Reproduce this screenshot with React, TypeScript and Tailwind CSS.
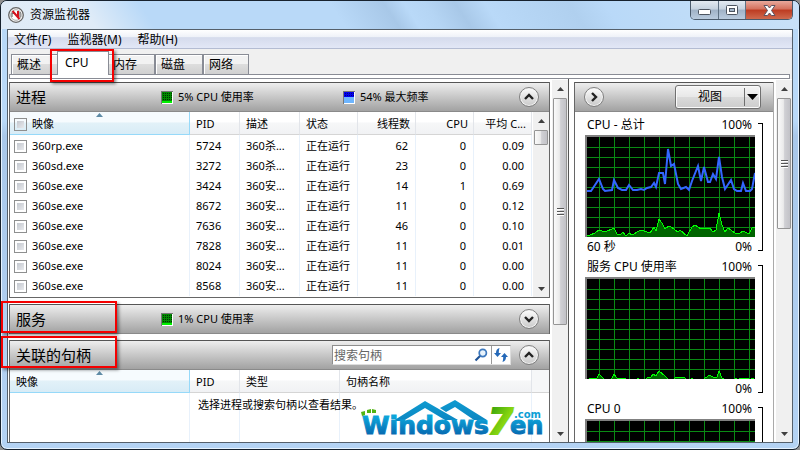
import type { ReactNode } from "react";
import clsx from "clsx";

const processes = [
    { name: "360rp.exe", pid: 5724, desc: "360杀...", threads: 62, cpu: 0, avg: "0.09" },
    { name: "360sd.exe", pid: 3272, desc: "360杀...", threads: 23, cpu: 0, avg: "0.00" },
    { name: "360se.exe", pid: 3424, desc: "360安...", threads: 14, cpu: 1, avg: "0.69" },
    { name: "360se.exe", pid: 8672, desc: "360安...", threads: 11, cpu: 0, avg: "0.12" },
    { name: "360se.exe", pid: 7636, desc: "360安...", threads: 46, cpu: 0, avg: "0.10" },
    { name: "360se.exe", pid: 7828, desc: "360安...", threads: 11, cpu: 0, avg: "0.01" },
    { name: "360se.exe", pid: 8024, desc: "360安...", threads: 11, cpu: 0, avg: "0.00" },
    { name: "360se.exe", pid: 8568, desc: "360安...", threads: 11, cpu: 0, avg: "0.00" },
];

const tabs = ["概述", "CPU", "内存", "磁盘", "网络"];

const frequencyLine =
    "0,54 4,54 8,48 12,42 16,52 18,54 25,53 27,43 31,51 35,53 39,53 42,48 46,53 50,53 54,52 57,53 60,51 64,50 67,46 69,50 72,36 76,36 78,47 81,12 84,29 87,27 91,47 94,52 99,50 102,53 105,44 111,29 114,44 117,30 121,45 123,45 126,37 129,42 132,20 135,40 138,52 144,43 147,52 150,54 154,54 156,46 159,54 163,54 165,52 168,36";
const usageLine =
    "0,99 3,98 8,96 12,93 18,95 27,91 30,97 34,97 36,95 39,99 42,96 45,98 54,93 63,96 67,90 69,94 72,82 75,86 78,92 82,89 84,90 91,95 93,93 100,99 105,90 108,88 114,92 123,91 126,95 129,93 132,76 135,88 138,95 141,91 148,96 153,96 156,94 162,97 165,91 168,90";
const serviceLine =
    "0,101 5,99 10,99 12,95 16,99 18,101 24,101 25,99 27,95 30,99 38,99 40,101 50,101 51,99 53,101 59,101 60,99 64,98 66,95 69,97 72,92 78,97 80,99 82,101 87,101 88,99 93,98 98,99 100,101 104,101 105,99 107,101 117,101 118,99 123,96 127,99 130,98 132,92 135,99 138,101 147,101 149,99 151,101 153,99 161,99 163,101 165,99 168,101";

function TriangleIcon({ down = false }: { down?: boolean }) {
    return (
        <svg width="7" height="4" viewBox="0 0 7 4" aria-hidden="true">
            <path d={down ? "M0 0h7L3.5 4z" : "M0 4h7L3.5 0z"} fill="#404040" />
        </svg>
    );
}

function Scrollbar({ label, thumb, grip = false }: { label: string; thumb: string; grip?: boolean }) {
    return (
        <div className="flex w-4 shrink-0 flex-col bg-[#f0f0f0]">
            <button type="button" aria-label={label + " 向上"} className="flex h-[18px] shrink-0 items-center justify-center">
                <TriangleIcon />
            </button>
            <div className="min-h-0 flex-1">
                <div
                    className={clsx(
                        "mx-px flex items-center justify-center rounded-[1px] border border-[#959595] bg-[linear-gradient(90deg,#fafafa,#ebebeb_45%,#d0d0d4_55%,#c2c2c7)]",
                        thumb
                    )}
                >
                    {grip && (
                        <svg width="7" height="8" viewBox="0 0 7 8" shapeRendering="crispEdges" aria-hidden="true">
                            <path d="M0 0h7v1H0zM0 3h7v1H0zM0 6h7v1H0z" fill="#555" />
                            <path d="M0 1h7v1H0zM0 4h7v1H0zM0 7h7v1H0z" fill="#fff" />
                        </svg>
                    )}
                </div>
            </div>
            <button type="button" aria-label={label + " 向下"} className="flex h-[17px] shrink-0 items-center justify-center">
                <TriangleIcon down />
            </button>
        </div>
    );
}

function RoundButton({ label, dir }: { label: string; dir: "up" | "down" | "right" }) {
    const paths = { up: "M5 11l4-4 4 4", down: "M5 7l4 4 4-4", right: "M7 5l4 4-4 4" };
    return (
        <button
            type="button"
            aria-label={label}
            className="flex size-5 shrink-0 items-center justify-center rounded-full border border-[#808080] bg-linear-to-b from-[#fdfdfd] to-[#c9c9c9] shadow-[inset_0_0_0_1px_#f4f4f4]"
        >
            <svg width="18" height="18" viewBox="0 0 18 18" fill="none" stroke="#222" strokeWidth="2.4" aria-hidden="true">
                <path d={paths[dir]} />
            </svg>
        </button>
    );
}

function Metric({ blue = false, children }: { blue?: boolean; children: ReactNode }) {
    return (
        <div className="flex w-[182px] shrink-0 items-center gap-[5px] whitespace-nowrap text-[11px]">
            <svg width="12" height="13" viewBox="0 0 12 13" shapeRendering="crispEdges" aria-hidden="true">
                <defs>
                    <pattern id={blue ? "dots-blue" : "dots-green"} width="2" height="2" patternUnits="userSpaceOnUse">
                        <rect width="2" height="2" fill={blue ? "#0000f0" : "#008a00"} />
                        <rect width="1" height="1" fill={blue ? "#000080" : "#003000"} />
                    </pattern>
                </defs>
                <rect width="12" height="13" fill="#fff" />
                <path d="M0 0h12v1H1v12H0z" fill="#777" />
                <rect x="1" y="1" width="10" height="11" fill={blue ? "#6db5ff" : "#00f000"} />
                <rect x="1" y="1" width="10" height={blue ? 5 : 9} fill={blue ? "url(#dots-blue)" : "url(#dots-green)"} />
            </svg>
            <span>{children}</span>
        </div>
    );
}

function SectionHeader({ title, open, children }: { title: string; open: boolean; children?: ReactNode }) {
    return (
        <div className="flex h-[30px] shrink-0 items-center border-y border-t-[#555] border-b-[#8a8a8a] bg-linear-to-b from-[#eeeeee] to-[#a2a2a2] pr-2.5 pl-1.5">
            <h2 className="w-[145px] shrink-0 text-[15px]">{title}</h2>
            <div className="flex min-w-0 flex-1 items-center">{children}</div>
            <RoundButton label={title} dir={open ? "up" : "down"} />
        </div>
    );
}

function Th({ sorted = false, right = false, children }: { sorted?: boolean; right?: boolean; children: ReactNode }) {
    return (
        <th
            scope="col"
            className={clsx(
                "relative h-[23px] overflow-hidden border-r border-b px-[5px] pt-0.5 font-normal whitespace-nowrap",
                right ? "text-right" : "pl-1.5 text-left",
                sorted
                    ? "border-[#96d9f9] bg-[linear-gradient(#f6fbfe_45%,#e2f1f8_50%,#d8ecf6)]"
                    : "border-r-[#e2e5ea] border-b-[#d5d5d5] bg-[linear-gradient(#ffffff_45%,#f6f7f8_50%,#f1f2f4)]"
            )}
        >
            {sorted && (
                <svg className="absolute top-px left-1/2 -ml-1" width="7" height="4" viewBox="0 0 7 4" aria-hidden="true">
                    <path d="M0 4h7L3.5 0z" fill="#5e8ba6" />
                </svg>
            )}
            {children}
        </th>
    );
}

function Check({ label }: { label: string }) {
    return (
        <input
            type="checkbox"
            aria-label={label}
            className="mr-[5px] size-[13px] shrink-0 appearance-none border border-[#8e8f8f] bg-white bg-[linear-gradient(135deg,#b9bec6,#f2f3f5)] bg-clip-content p-0.5"
        />
    );
}

function ProcessTable() {
    const cell = "border-r border-[#e8f1fb] whitespace-nowrap";
    return (
        <table className="w-full table-fixed border-separate border-spacing-0 text-[11px] leading-4">
            <colgroup>
                <col />
                <col className="w-[50px]" />
                <col className="w-[60px]" />
                <col className="w-[58px]" />
                <col className="w-[58px]" />
                <col className="w-[58px]" />
                <col className="w-[58px]" />
            </colgroup>
            <thead>
                <tr>
                    <Th sorted>
                        <div className="-ml-0.5 flex items-center">
                            <Check label="全选" />
                            映像
                        </div>
                    </Th>
                    <Th>PID</Th>
                    <Th>描述</Th>
                    <Th>状态</Th>
                    <Th right>线程数</Th>
                    <Th right>CPU</Th>
                    <Th right>平均 C...</Th>
                </tr>
            </thead>
            <tbody>
                <tr aria-hidden="true">
                    {[0, 1, 2, 3, 4, 5, 6].map((i) => (
                        <td key={i} className={clsx(cell, "h-px")} />
                    ))}
                </tr>
                {processes.map((p) => (
                    <tr key={p.pid} className="h-5">
                        <td className={cell}>
                            <label className="flex items-center pl-1">
                                <Check label={p.name} />
                                {p.name}
                            </label>
                        </td>
                        <td className={clsx(cell, "pl-1.5")}>{p.pid}</td>
                        <td className={clsx(cell, "pl-1.5")}>{p.desc}</td>
                        <td className={clsx(cell, "pl-1.5")}>正在运行</td>
                        <td className={clsx(cell, "pr-[7px] text-right")}>{p.threads}</td>
                        <td className={clsx(cell, "pr-[7px] text-right")}>{p.cpu}</td>
                        <td className={clsx(cell, "pr-[7px] text-right")}>{p.avg}</td>
                    </tr>
                ))}
            </tbody>
        </table>
    );
}

function HandleTable() {
    const cell = "border-r border-[#e8f1fb] align-top";
    return (
        <table className="w-full table-fixed border-separate border-spacing-0 text-[11px] leading-4">
            <colgroup>
                <col className="w-[180px]" />
                <col className="w-[50px]" />
                <col className="w-[100px]" />
                <col />
                <col className="w-[17px]" />
            </colgroup>
            <thead>
                <tr>
                    <Th sorted>映像</Th>
                    <Th>PID</Th>
                    <Th>类型</Th>
                    <Th>句柄名称</Th>
                    <td className="border-b border-[#d5d5d5] bg-[#f6f7f8]" />
                </tr>
            </thead>
            <tbody>
                <tr className="h-[60px]">
                    <td className={cell} />
                    <td className={clsx(cell, "pt-1 pl-2 whitespace-nowrap")}>选择进程或搜索句柄以查看结果。</td>
                    <td className={cell} />
                    <td className={cell} />
                    <td />
                </tr>
            </tbody>
        </table>
    );
}

type GraphProps = { title: string; footer?: ReactNode; usage?: string; frequency?: string };

function Graph({ title, footer, usage, frequency }: GraphProps) {
    return (
        <section className="flex shrink-0 text-[12px]">
            <div className="min-w-0 flex-1">
                <div className="flex h-5 items-center justify-between pr-[3px] pl-0.5">
                    <h3>{title}</h3>
                    <span>100%</span>
                </div>
                <div className="h-[102px] border-t-2 border-l-2 border-[#808080] bg-black">
                    <svg className="block h-full w-full" viewBox="0 0 168 100" preserveAspectRatio="none" aria-hidden="true">
                        <g fill="#0a8a14" shapeRendering="crispEdges">
                            {Array.from({ length: 11 }, (_, i) => (
                                <rect key={i} x={12 + i * 15} y="0" width="1" height="100" />
                            ))}
                            {Array.from({ length: 9 }, (_, i) => (
                                <rect key={i} x="0" y={10 + i * 10} width="168" height="1" />
                            ))}
                        </g>
                        {usage && (
                            <>
                                <polygon points={"0,102 " + usage + " 168,102"} fill="#006400" />
                                <polyline points={usage} fill="none" stroke="#00ff00" shapeRendering="crispEdges" />
                            </>
                        )}
                        {frequency && <polyline points={frequency} fill="none" stroke="#3366ff" strokeWidth="2" />}
                    </svg>
                </div>
                <div className="flex h-5 items-center justify-between pr-[3px] pl-0.5">{footer}</div>
            </div>
            <div className="mt-2 mb-1.5 ml-[3px] w-[5px] border-y border-r border-black" />
        </section>
    );
}

function WindowControls() {
    const glass = "bg-[linear-gradient(#e3eaf1,#c5d2df_45%,#a0b2c6_50%,#b9cbde)]";
    return (
        <div className="flex h-[19px] self-start overflow-hidden rounded-b-[5px] border border-t-0 border-[#4a5a6b]">
            <button type="button" aria-label="最小化" className={clsx("flex w-7 items-center justify-center border-r border-[#5f7183]", glass)}>
                <svg width="13" height="6" viewBox="0 0 13 6" className="mt-1">
                    <rect x="0.5" y="0.5" width="12" height="5" rx="1" fill="#fff" stroke="#4d5560" />
                </svg>
            </button>
            <button type="button" aria-label="最大化" className={clsx("flex w-[27px] items-center justify-center border-r border-[#5f7183]", glass)}>
                <svg width="12" height="10" viewBox="0 0 12 10">
                    <rect x="0.5" y="0.5" width="11" height="9" rx="1" fill="#fff" stroke="#4d5560" />
                    <rect x="3.5" y="3.5" width="5" height="3" fill="#a7b9cc" stroke="#4d5560" />
                </svg>
            </button>
            <button
                type="button"
                aria-label="关闭"
                className="flex w-[46px] items-center justify-center bg-[linear-gradient(#e9a99c,#d4705c_45%,#bd3b21_50%,#cf6a4e)]"
            >
                <svg width="13" height="11" viewBox="0 0 13 11">
                    <path
                        d="M1 .5h3.5l2 2.5 2-2.5H12L8.5 5.5 12 10.5H8.500l-2-2.500-2 2.500H1l3.500-5z"
                        fill="#fff"
                        stroke="#5c5360"
                        strokeLinejoin="round"
                    />
                </svg>
            </button>
        </div>
    );
}

function SiteLogo() {
    const family = "font-['DejaVu_Sans',sans-serif] font-bold";
    return (
        <svg className="absolute top-[396px] left-[359px] overflow-visible" width="188" height="42" viewBox="0 0 188 42" role="img" aria-label="Windows7en.com">
            <defs>
                <linearGradient id="logo-blue" x1="0" y1="0" x2="0" y2="1">
                    <stop offset="0.2" stopColor="#0ca5da" />
                    <stop offset="1" stopColor="#0558a4" />
                </linearGradient>
                <linearGradient id="logo-roof" x1="0" y1="0" x2="0" y2="1">
                    <stop offset="0" stopColor="#0f9bd0" />
                    <stop offset="1" stopColor="#0b86c2" />
                </linearGradient>
                <linearGradient id="logo-green" x1="0" y1="0" x2="1" y2="1">
                    <stop offset="0.1" stopColor="#2f9e0c" />
                    <stop offset="0.6" stopColor="#8bd810" />
                    <stop offset="1" stopColor="#4cb00a" />
                </linearGradient>
            </defs>
            <path d="M33 24L65 4l33 19H85L65 11 43 24z" fill="url(#logo-roof)" />
            <path d="M80 11l15-8 32 20h-13L95 10l-9 5z" fill="url(#logo-roof)" />
            <text x="2" y="37" fontSize="25" fill="url(#logo-blue)" stroke="url(#logo-blue)" strokeWidth="1" className={family}>
                Windows
            </text>
            <g fill="#52b413">
                <path d="M1 15l4-1v4l-3 1zM7 13l4-1v4H7zM12 12l4 1v3h-4z" />
            </g>
            <text x="150" y="37" fontSize="24" fill="url(#logo-blue)" stroke="url(#logo-blue)" strokeWidth="1" className={family}>
                en
            </text>
            <text x="128" y="37" fontSize="36" fill="url(#logo-green)" stroke="url(#logo-green)" strokeWidth="2" className={clsx(family, "italic")}>
                7
            </text>
            <text x="154" y="21" fontSize="10" fill="#0ca0d6" className={family}>
                .com
            </text>
        </svg>
    );
}

function Highlight({ className }: { className: string }) {
    return <div className={clsx("pointer-events-none absolute z-20 border-2 border-[#f50000] shadow-[2px_2px_3px_rgba(0,0,0,0.45)]", className)} />;
}

export default function App() {
    return (
        <div className="h-screen bg-[#8f8f8f] font-['Noto_Sans','Noto_Sans_CJK_SC',sans-serif] text-black">
            <div className="relative flex h-full flex-col overflow-hidden rounded-[7px] border border-[#17222e] bg-[linear-gradient(#b9d9f8,#b9d9f8_120px,#a9c8ea_135px,#b4d3f4)] px-1.5 pb-1.5 shadow-[inset_0_0_0_1px_#e6f3ff]">
                <header className="-mx-1.5 flex h-7 shrink-0 items-center bg-[linear-gradient(57deg,#dfebf7,#e0ecf8_80px,#b9d9f8_130px,#b9d9f8_290px,#a8c8e8_335px,#b9d9f8_352px,#b5d5f4_370px,#a8c8e8_395px,#b9d9f8_420px,#b0d0ef_490px,#b9d9f8_520px,#c9e1f8)] pr-1.5 pl-[7px]">
                    <svg width="16" height="16" viewBox="0 0 16 16" aria-hidden="true">
                        <circle cx="8" cy="8" r="7.300" fill="#f7f7f7" stroke="#666" strokeWidth="1.300" />
                        <circle cx="8" cy="8" r="5.300" fill="#fff" stroke="#999" strokeWidth="0.800" />
                        <path d="M4 10V6l4 1M12 5v5" stroke="#555" strokeWidth="1" fill="none" />
                        <path d="M4.500 4l7 8M10 4v6" stroke="#d5121d" strokeWidth="2" />
                    </svg>
                    <h1 className="ml-1.5 flex-1 text-[12px]">资源监视器</h1>
                    <WindowControls />
                </header>

                <div className="flex min-h-0 flex-1 flex-col overflow-hidden border border-[#55606b] bg-white">
                    <nav className="flex h-[19px] shrink-0 items-center gap-4 border-b border-[#b4bcd2] bg-[linear-gradient(#ffffff,#eef1f8_40%,#d5dbec_42%,#e2e7f6)] pt-0.5 pl-1.5 text-[12px]">
                        <button type="button">文件(F)</button>
                        <button type="button">监视器(M)</button>
                        <button type="button">帮助(H)</button>
                    </nav>

                    <div className="shrink-0 bg-[#f0f0f0] px-px">
                        <div role="tablist" className="flex h-[25px] items-end pl-0.5 text-[12px]">
                            {tabs.map((tab) => (
                                <button
                                    key={tab}
                                    type="button"
                                    role="tab"
                                    aria-selected={tab === "CPU"}
                                    className={clsx(
                                        "border border-b-0 border-[#898c95] text-left",
                                        tab === "CPU"
                                            ? "z-10 -mx-0.5 -mb-px h-[24px] w-[52px] bg-white pb-0.5 pl-[7px]"
                                            : "h-5 w-12 bg-[linear-gradient(#f2f2f2_45%,#dddddd_50%,#d0d0d0)] pl-[5px] shadow-[inset_1px_1px_0_#fff] last:w-[46px]"
                                    )}
                                >
                                    {tab}
                                </button>
                            ))}
                        </div>
                        <div className="mr-px h-[5px] border border-[#898c95] bg-white" />
                    </div>

                    <main className="flex min-h-0 flex-1 pl-px">
                        <div className="flex min-w-0 flex-1 flex-col gap-1.5 overflow-hidden pt-[3px]">
                            <section className="shrink-0 border-x border-b border-[#666]">
                                <SectionHeader title="进程" open>
                                    <Metric>5% CPU 使用率</Metric>
                                    <Metric blue>54% 最大频率</Metric>
                                </SectionHeader>
                                <div className="flex h-[185px] overflow-hidden">
                                    <div className="min-w-0 flex-1">
                                        <ProcessTable />
                                    </div>
                                    <div className="flex w-[17px] pl-px">
                                        <Scrollbar label="进程列表" thumb="h-[15px]" />
                                    </div>
                                </div>
                            </section>
                            <section className="shrink-0 border-x border-[#666]">
                                <SectionHeader title="服务" open={false}>
                                    <Metric>1% CPU 使用率</Metric>
                                </SectionHeader>
                            </section>
                            <section className="min-h-0 flex-1 overflow-hidden border-x border-[#666]">
                                <SectionHeader title="关联的句柄" open>
                                    <div className="mr-2 ml-auto flex h-5 w-[179px] shrink-0 items-center border border-t-[#8e8e8e] border-r-[#ddd] border-b-[#ddd] border-l-[#8e8e8e] bg-white">
                                        <input
                                            type="text"
                                            aria-label="搜索句柄"
                                            placeholder="搜索句柄"
                                            className="min-w-0 flex-1 pt-0.5 pl-px text-[12px] outline-none placeholder:text-[#666]"
                                        />
                                        <button type="button" aria-label="搜索" className="flex w-5 justify-center">
                                            <svg width="14" height="14" viewBox="0 0 14 14" fill="none" aria-hidden="true">
                                                <path d="M1.500 12.500l5-5" stroke="#1f5296" strokeWidth="2.200" />
                                                <circle cx="8.800" cy="5" r="3.600" fill="#e8f3fc" stroke="#3d78bd" strokeWidth="1.700" />
                                            </svg>
                                        </button>
                                        <button type="button" aria-label="刷新" className="flex h-full w-[19px] items-center justify-center border-l border-[#999]">
                                            <svg width="14" height="14" viewBox="0 0 14 14" fill="#2468b8" aria-hidden="true">
                                                <path d="M5.500 0C3 .5 2 2.500 2 5H0l3.500 4L7 5H4.800c0-2 .2-3.500.7-5z" />
                                                <path d="M8.500 14c2.500-.5 3.500-2.500 3.500-5h2l-3.500-4L7 9h2.200c0 2-.2 3.500-.7 5z" />
                                            </svg>
                                        </button>
                                    </div>
                                </SectionHeader>
                                <HandleTable />
                            </section>
                        </div>

                        <div className="ml-0.5 flex border-r border-[#555] pt-px">
                            <Scrollbar label="面板" thumb="h-[227px]" grip />
                        </div>

                        <aside className="mt-[3px] ml-[5px] flex w-[200px] shrink-0 flex-col overflow-hidden border-x border-[#666] border-r-[#aaa]">
                            <div className="flex h-[30px] shrink-0 items-center justify-between border-y border-t-[#555] border-b-[#8a8a8a] bg-linear-to-b from-[#eeeeee] to-[#a2a2a2] pr-3 pl-[9px]">
                                <RoundButton label="折叠" dir="right" />
                                <button
                                    type="button"
                                    className="flex h-6 w-[86px] items-center rounded-[3px] border border-[#707070] bg-[linear-gradient(#f5f5f5,#e8e8e8_48%,#dadada_52%,#cdcdcd)] text-[12px] shadow-[inset_0_0_0_1px_#fafafa]"
                                >
                                    <span className="flex-1">视图</span>
                                    <span className="flex h-[18px] w-4 items-center justify-center border-l border-[#707070]">
                                        <svg width="11" height="6" viewBox="0 0 11 6" aria-hidden="true">
                                            <path d="M0 0h11L5.500 6z" />
                                        </svg>
                                    </span>
                                </button>
                            </div>
                            <div className="flex min-h-0 flex-1 flex-col overflow-hidden pt-[3px] pr-2.5 pl-2.5">
                                <Graph
                                    title="CPU - 总计"
                                    usage={usageLine}
                                    frequency={frequencyLine}
                                    footer={
                                        <>
                                            <span>60 秒</span>
                                            <span>0%</span>
                                        </>
                                    }
                                />
                                <Graph title="服务 CPU 使用率" usage={serviceLine} footer={<span className="ml-auto">0%</span>} />
                                <Graph title="CPU 0" />
                            </div>
                        </aside>

                        <div className="ml-0.5 flex pt-px">
                            <Scrollbar label="图表" thumb="h-[131px]" grip />
                        </div>
                    </main>
                </div>

                <SiteLogo />
                <Highlight className="top-12 left-[49px] h-[33px] w-[64px]" />
                <Highlight className="top-[300px] left-0 h-8 w-[116px]" />
                <Highlight className="top-[335px] left-0 h-8 w-[116px]" />
            </div>
        </div>
    );
}
